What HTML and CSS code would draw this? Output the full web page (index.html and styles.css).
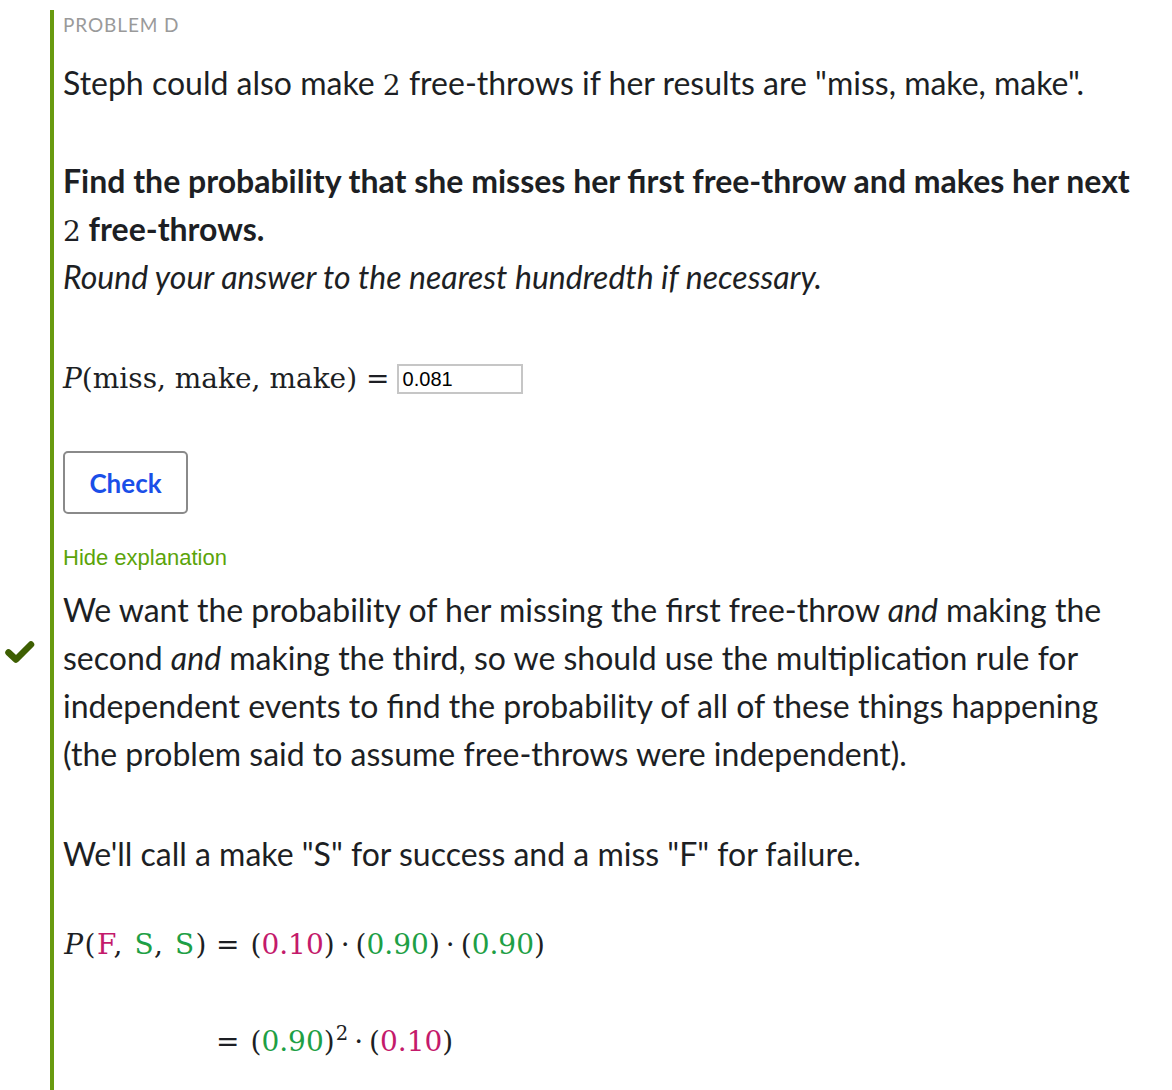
FILE: index.html
```html
<!DOCTYPE html>
<html>
<head>
<meta charset="utf-8">
<link rel="stylesheet" href="styles.css">
</head>
<body>
<div class="problem">
  <div class="label">PROBLEM D</div>
  <p class="intro">Steph could also make <span class="m">2</span> free-throws if her results are "miss, make, make".</p>
  <p class="task"><strong>Find the probability that she misses her first free-throw and makes her next <span class="nowrap"><span class="m nb">2</span> free-throws.</span></strong><br><em>Round your answer to the nearest hundredth if necessary.</em></p>
  <div class="answer-row">
    <span class="m"><i>P</i>(miss, make, make)<span class="eq">=</span></span>
    <span class="answer">0.081</span>
  </div>
  <button class="check-btn">Check</button>
  <div class="hide-link">Hide explanation</div>
  <div class="explanation">
    <svg class="tick" width="30" height="24" viewBox="0 0 30 24"><polyline points="3.5,12.5 11,19.5 26,4.5" fill="none" stroke="#3e5f02" stroke-width="6.5" stroke-linecap="round" stroke-linejoin="round"/></svg>
    <p>We want the probability of her missing the first free-throw <em>and</em> making the second <em>and</em> making the third, so we should use the multiplication rule for independent events to find the probability of all of these things happening (the problem said to assume free-throws were independent).</p>
  </div>
  <p class="call">We'll call a make "S" for success and a miss "F" for failure.</p>
  <div class="align m">
    <div class="lhs"><i>P</i>(<span class="red">F</span>, <span class="grn">S</span>, <span class="grn">S</span>)</div>
    <div class="rhs"><span class="eq first">=</span>(<span class="red">0.10</span>)<span class="dot">·</span>(<span class="grn">0.90</span>)<span class="dot">·</span>(<span class="grn">0.90</span>)</div>
    <div class="lhs"></div>
    <div class="rhs"><span class="eq first">=</span>(<span class="grn">0.90</span>)<sup>2</sup><span class="dot">·</span>(<span class="red">0.10</span>)</div>
  </div>
</div>
</body>
</html>
```
FILE: styles.css
```css
html, body {
  margin: 0;
  padding: 0;
  background: #ffffff;
}
body {
  font-family: Lato, "Open Sans", sans-serif;
  color: #1d1f24;
  height: 1090px;
  overflow: hidden;
}
.problem {
  margin-left: 50px;
  margin-right: 30px;
  margin-top: 10px;
  border-left: 4px solid #689a10;
  padding-left: 9px;
  padding-bottom: 40px;
  font-size: 32px;
  line-height: 48px;
}
.label {
  font-size: 19px;
  line-height: 30px;
  color: #9a9a9a;
  letter-spacing: 0.9px;
}
p {
  margin: 0;
}
.intro {
  margin-top: 19px;
}
.task {
  margin-top: 50px;
}
.task strong {
  font-weight: 700;
}
.nowrap {
  white-space: nowrap;
}
.m {
  font-family: "DejaVu Serif", "Liberation Serif", serif;
  font-size: 28px;
}
p .m {
  line-height: 1;
}
.nb {
  font-weight: 400;
}
.m i {
  font-style: italic;
}
.answer-row {
  margin-top: 54px;
  height: 48px;
  display: flex;
  align-items: center;
}
.answer-row .m {
  line-height: 1;
}
.eq {
  margin: 0 7px 0 9px;
}
.answer {
  box-sizing: border-box;
  width: 126px;
  height: 30px;
  border: 2px solid #c6c6c6;
  font-family: "Liberation Sans", Arial, sans-serif;
  font-size: 20px;
  line-height: 26px;
  padding-left: 4px;
  color: #000;
}
.check-btn {
  display: block;
  margin-top: 48px;
  box-sizing: border-box;
  width: 125px;
  height: 63px;
  border: 2px solid #8a8a8a;
  border-radius: 5px;
  background: #fff;
  font-family: Lato, sans-serif;
  font-weight: 700;
  font-size: 26px;
  color: #1a4fe8;
  padding: 0;
}
.hide-link {
  margin-top: 29px;
  font-family: "Liberation Sans", Arial, sans-serif;
  font-size: 22px;
  line-height: 30px;
  color: #5ba40a;
}
.explanation {
  position: relative;
  margin-top: 13px;
}
.tick {
  position: absolute;
  left: -58px;
  top: 54px;
}
.call {
  margin-top: 52px;
}
.align {
  margin-top: 43px;
  display: grid;
  grid-template-columns: 145px auto;
  justify-content: start;
  row-gap: 49px;
  line-height: 48px;
  font-size: 28px;
  white-space: nowrap;
}
.align .lhs {
  text-align: right;
  letter-spacing: 1.5px;
}
.eq.first {
  margin: 0 11px 0 8px;
}
.dot {
  margin: 0 6px;
}
.red {
  color: #c41a6b;
}
.grn {
  color: #1e9f45;
}
sup {
  font-size: 0.7em;
  line-height: 0;
  vertical-align: 0.55em;
  margin-left: 1px;
}
```
